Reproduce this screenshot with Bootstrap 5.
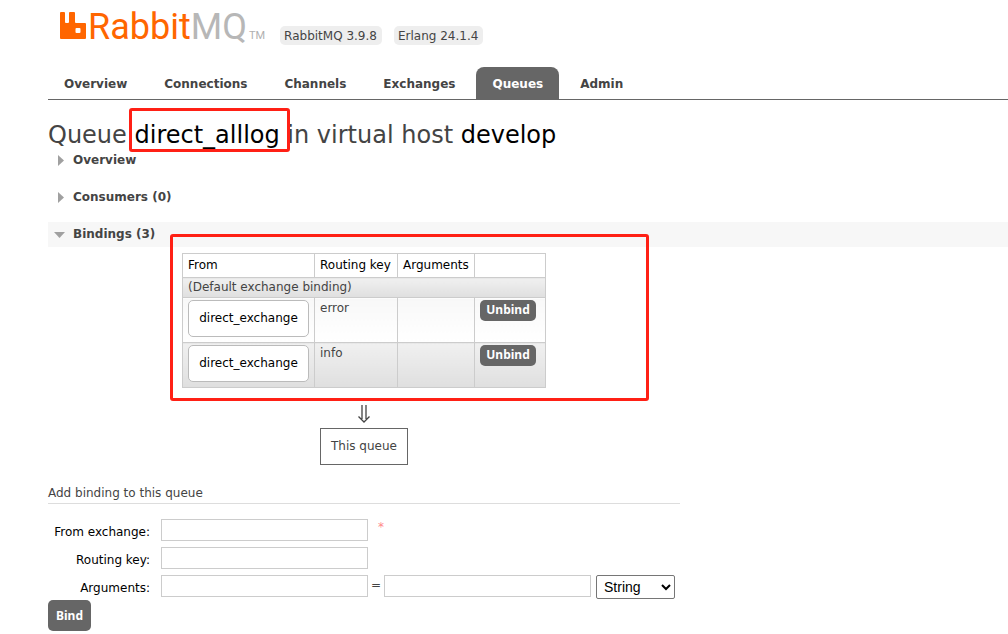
<!DOCTYPE html>
<html lang="en">
<head>
<meta charset="utf-8">
<meta name="viewport" content="width=device-width, initial-scale=1">
<title>RabbitMQ Management</title>
<link href="https://cdn.jsdelivr.net/npm/bootstrap@5.3.0/dist/css/bootstrap.min.css" rel="stylesheet">
<style>
  body { font: 12px/17px Verdana, "DejaVu Sans", sans-serif; color: #444; background: #fff; overflow-x: hidden; }
  .page-shell { padding-left: 48px; }
  a { color: #000; text-decoration: none; }

  .brand-bar { height: 67px; padding: 6px 0 0 11px; }
  .brand-mark { width: 27px; height: 28px; margin-top: 6px; }
  .brand-name { font: 36px/42px Roboto, sans-serif; color: #f60; margin-left: 2px; }
  .brand-name span { color: #b7b7b7; }
  .brand-tm { font: 11px/14px Roboto, sans-serif; color: #b0b0b0; margin: 23px 0 0 2px; }
  .versions { gap: 12px; margin: 20px 0 0 15px; }
  .version { background: #eee; border-radius: 5px; padding: 2px 5px 0 4px; }

  .main-tabs { border-bottom: 1px solid #666; gap: 5px; }
  .main-tabs .nav-link { color: #444; font-weight: bold; line-height: 16px; padding: 9px 16px 7px; border-radius: 8px 8px 0 0; }
  .main-tabs .nav-link.active { background: #666; color: #fff; }

  h1 { font-size: 24px; line-height: 30px; margin: 20px 0 0; font-weight: normal; }
  .callout-box { position: absolute; border: 3px solid #ff2015; border-radius: 3px; pointer-events: none; }
  .around-name { inset: -13px -10px -3px -5px; }
  .around-table { left: 122px; top: 12px; width: 479px; height: 167px; }

  .sections { margin-top: -2px; }
  .section-head { font-size: 12px; line-height: 17px; font-weight: bold; margin: 0 0 12px; padding: 4px 0 4px 6px; gap: 7px; }
  .section-head.open { background: #f7f7f7; margin-bottom: 0; }
  .section-head svg { width: 12px; height: 12px; fill: #a0a0a0; }

  .binding-flow { width: 364px; margin: 6px 0 0 134px; }
  .bindings { width: 100%; table-layout: fixed; border-collapse: collapse; }
  .bindings th, .bindings td { border: 1px solid #ccc; vertical-align: top; }
  .bindings th { height: 24px; padding: 3px 5px; font-weight: normal; color: #000; white-space: nowrap; }
  .bindings td { padding: 2px 5px; }
  .bindings .default-row td { height: 20px; padding: 1px 5px; }
  .bindings .tall td { height: 45px; }
  .shade td { background: linear-gradient(#f0f0f0, #dfdfdf); }
  .pale td { background: linear-gradient(#f8f8f8, #fff); }
  .exchange { display: block; border: 1px solid #bbb; border-radius: 5px; background: #fff; padding: 9px 0; text-align: center; }
  .dark-btn { background: #666; color: #fff; border: 0; border-radius: 5px; font-family: "Noto Sans", sans-serif; font-weight: bold; }
  .unbind { padding: 2px 0 3px; line-height: 16px; width: 56px; }
  .flow-arrow { width: 14px; height: 18px; margin: 17px 0 5px; }
  .queue-box { border: 1px solid #666; padding: 9px 10px; line-height: 17px; white-space: nowrap; }

  .add-form { max-width: 632px; margin-top: 20px; }
  .add-title { font-size: 12px; line-height: 17px; font-weight: normal; border-bottom: 1px solid #ddd; padding-bottom: 1px; margin: 0 0 15px; }
  .field-row { height: 28px; }
  .field-row.last-row { height: 25px; }
  .field-row label { width: 102px; text-align: right; color: #000; padding-top: 5px; margin-right: 11px; white-space: nowrap; }
  .field-row input { width: 207px; height: 22px; border: 1px solid #ccc; background: #fff; padding: 2px; }
  .required { color: #f88; margin-left: 10px; }
  .equals { width: 16px; text-align: center; padding-top: 2px; }
  .field-row select { width: 79px; height: 24px; margin-left: 5px; border: 1px solid #767676; border-radius: 2px; background: #fff; color: #000; font: 14px "Liberation Sans", Arial, sans-serif; padding: 0 3px; }
  .bind-btn { padding: 7px 0; width: 43px; line-height: 17px; }
</style>
</head>
<body>
<div class="page-shell">
  <header>
    <div class="brand-bar d-flex align-items-start">
      <a href="#" class="d-flex align-items-start">
        <svg class="brand-mark" viewBox="0 0 27 28" fill="#f60" aria-hidden="true"><path fill-rule="evenodd" d="M2 0h3a1 1 0 0 1 1 1v9q0 1 1 1h2q1 0 1-1V1a1 1 0 0 1 1-1h4a1 1 0 0 1 1 1v9q0 1 1 1h9a1 1 0 0 1 1 1v14a1 1 0 0 1-1 1H2a1 1 0 0 1-1-1V1a1 1 0 0 1 1-1zM17.500 16a1 1 0 0 0-1 1v3a1 1 0 0 0 1 1h3a1 1 0 0 0 1-1v-3a1 1 0 0 0-1-1z"/></svg>
        <span class="brand-name">Rabbit<span>MQ</span></span>
        <span class="brand-tm">TM</span>
      </a>
      <div class="versions d-flex">
        <span class="version">RabbitMQ 3.9.8</span>
        <span class="version">Erlang 24.1.4</span>
      </div>
    </div>
    <nav>
      <ul class="nav main-tabs">
        <li class="nav-item"><a class="nav-link" href="#">Overview</a></li>
        <li class="nav-item"><a class="nav-link" href="#">Connections</a></li>
        <li class="nav-item"><a class="nav-link" href="#">Channels</a></li>
        <li class="nav-item"><a class="nav-link" href="#">Exchanges</a></li>
        <li class="nav-item"><a class="nav-link active" aria-current="page" href="#">Queues</a></li>
        <li class="nav-item"><a class="nav-link" href="#">Admin</a></li>
      </ul>
    </nav>
  </header>

  <main>
    <h1>Queue <a href="#" class="position-relative">direct_alllog<span class="callout-box around-name"></span></a> in virtual host <a href="#">develop</a></h1>

    <div class="sections">
      <h2 class="section-head d-flex align-items-center"><svg viewBox="0 0 12 12"><path d="M4 0l6 5.500L4 11z"/></svg>Overview</h2>
      <h2 class="section-head d-flex align-items-center"><svg viewBox="0 0 12 12"><path d="M4 0l6 5.500L4 11z"/></svg>Consumers (0)</h2>

      <section class="position-relative">
        <h2 class="section-head open d-flex align-items-center"><svg viewBox="0 0 12 12"><path d="M0 3h11L5.500 9z"/></svg>Bindings (3)</h2>
        <div class="binding-flow d-flex flex-column align-items-center">
          <table class="bindings">
            <colgroup><col style="width:132px"><col style="width:83px"><col style="width:77px"><col></colgroup>
            <thead><tr><th>From</th><th>Routing key</th><th>Arguments</th><th></th></tr></thead>
            <tbody>
              <tr class="default-row shade"><td colspan="4">(Default exchange binding)</td></tr>
              <tr class="tall pale"><td><a class="exchange" href="#">direct_exchange</a></td><td>error</td><td></td><td><button type="button" class="dark-btn unbind">Unbind</button></td></tr>
              <tr class="tall shade"><td><a class="exchange" href="#">direct_exchange</a></td><td>info</td><td></td><td><button type="button" class="dark-btn unbind">Unbind</button></td></tr>
            </tbody>
          </table>
          <svg class="flow-arrow" viewBox="0 0 14 18" fill="none" stroke="#444" stroke-width="1.300" aria-hidden="true"><path d="M5 0v14M9 0v14M1.500 11.500L7 17l5.500-5.500"/></svg>
          <div class="queue-box">This queue</div>
        </div>
        <div class="callout-box around-table"></div>
      </section>
    </div>

    <form class="add-form">
      <h3 class="add-title">Add binding to this queue</h3>
      <div class="field-row d-flex align-items-start">
        <label for="source">From exchange:</label><input id="source" type="text"><span class="required">*</span>
      </div>
      <div class="field-row d-flex align-items-start">
        <label for="key">Routing key:</label><input id="key" type="text">
      </div>
      <div class="field-row last-row d-flex align-items-start">
        <label for="arg">Arguments:</label><input id="arg" type="text"><span class="equals">=</span><input type="text" aria-label="Argument value"><select aria-label="Argument type"><option>String</option><option>Number</option><option>Boolean</option><option>List</option></select>
      </div>
      <button type="button" class="dark-btn bind-btn">Bind</button>
    </form>
  </main>
</div>
<script src="https://cdn.jsdelivr.net/npm/bootstrap@5.3.0/dist/js/bootstrap.bundle.min.js"></script>
</body>
</html>
